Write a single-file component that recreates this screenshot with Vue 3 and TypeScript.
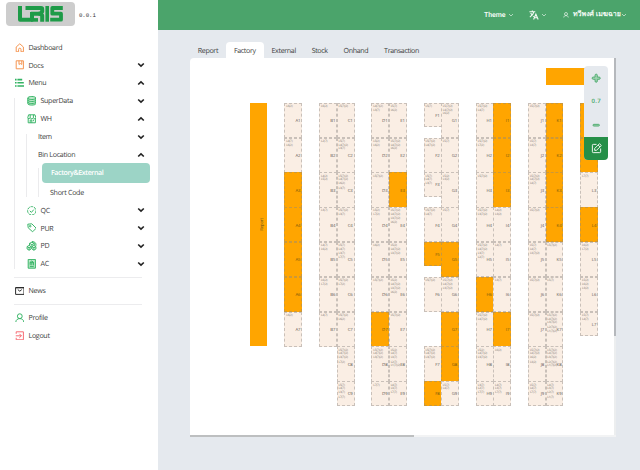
<script setup lang="ts">
interface Cell {
  id: string
  col: number
  row: number
  full: boolean
  short: boolean
  lots: string[]
}

const tabs = ['Report', 'Factory', 'External', 'Stock', 'Onhand', 'Transaction']
const activeTab = 'Factory'

const a = 'L5(7)(2)'
const b = 'L4(7)(2)'
const c = 'L3(7)(2)'
const d = 'L4(7)'
const e = 'L3(7)'
const f = 'L5(2)'
const g = 'L6(2)'

// One entry per bin; null marks an occupied bin drawn in orange.
const racks: { name: string; col: number; bins: (string[] | null)[] }[] = [
  { name: 'A', col: 3, bins: [[g], ['L4(7)', g], null, null, null, null, [g]] },
  { name: 'B', col: 5, bins: [[g], ['L2(7)'], ['L4(2)', f], [e], [d, g], [g, 'L7(2)'], [d]] },
  { name: 'C', col: 6, bins: [[a], ['L5(7)', b, 'L3(7)'], [a, b, g, e], [a, e], ['L5(7)', d, e, 'L7(7)'], [a, 'L7(2)'], [a, g], [a, b, c, 'L7(2)'], ['L5(7)', d, e, 'L7(7)']] },
  { name: 'D', col: 8, bins: [[b, 'L3(7)'], [f, g], [a], [f, 'L7(2)'], [g], [a], null, [a, b, c], ['L7(7)']] },
  { name: 'E', col: 9, bins: [['L5(7)', g], [a, b, g], null, [a, b, c, g], [f, b, c], [f, b, c, g], [a], [f, d, e, 'L2(7)', 'L1(7)(2)'], [d, e, 'L7(7)']] },
  { name: 'F', col: 11, bins: [['L5(7)'], [a, b], ['L5(7)', d, e], [a, d], null, [a], [a, b, c], null] },
  { name: 'G', col: 12, bins: [[a, b, g], ['L5(7)'], [f, 'L3(2)'], ['L5(7)'], null, [a, b, c], null, null, ['L5(7)', d]] },
  { name: 'H', col: 14, bins: [[a, d], [a, 'L7(2)'], [a], [a, c], [a, b, e, 'L2(7)'], null, [a, b], [f, b, c], ['L3(7)', 'L2(7)', 'L7(7)']] },
  { name: 'I', col: 15, bins: [null, null, null, ['L4(2)', 'L3(2)'], [d], ['L3(7)'], null, [g], [d, e, 'L7(7)']] },
  { name: 'J', col: 17, bins: [[a], ['L5(7)', 'L3(7)'], [a, b, d], [a], ['L5(7)', d, c], [a], [a], [a, b, g, 'L3(2)'], ['L5(7)', d, 'L7(7)']] },
  { name: 'K', col: 18, bins: [null, null, null, null, [a], ['L5(7)'], [a, b, c, 'L2(7)(2)', 'L1(7)(2)'], [a, b, c, 'L2(7)(2)', 'L1(7)(2)'], [d, e, 'L2(7)', 'L1(7)']] },
  { name: 'L', col: 20, bins: [null, null, ['L7(7)'], null, [g, 'L7(2)'], ['L5(2)', g, 'L3(2)'], ['L5(7)', d]] },
]

const shortBins = ['F1', 'F3', 'F5', 'L7']

const cells: Cell[] = racks.flatMap((rack) =>
  rack.bins.map((lots, i) => {
    const id = `${rack.name}${i + 1}`
    const row = rack.name === 'F' && i > 5 ? i + 2 : i + 1
    return { id, col: rack.col, row, full: lots === null, short: shortBins.includes(id), lots: lots ?? [] }
  }),
)
</script>

<template>
  <div class="app">
    <aside class="sidebar">
      <div class="brand">
        <div class="logo">
          <svg viewBox="0 0 45 16" fill="none" stroke="#1e9b48" stroke-width="4" stroke-linejoin="round">
            <path d="M2 0V13.700H14V6" />
            <path d="M7.500 2H23Q24.200 2 24.200 3.200V5.500L22.500 7.700H13" />
            <path d="M20.500 7.800H22.500L24.200 9.500V15.700" />
            <path d="M13 13.900H20" stroke-width="3.600" />
            <path d="M29.200 0V15.700" stroke-width="3.600" />
            <path d="M44.800 2H34.300V7.700H43V13.700H32.200" stroke-width="3.800" />
          </svg>
        </div>
        <span class="version">0.0.1</span>
      </div>

      <nav class="menu">
        <div class="item">
          <svg class="ic orange" viewBox="0 0 24 24"><path d="M3 10 12 2l9 8v12h-6v-6a3 3 0 0 0-6 0v6H3z" /></svg>
          <span>Dashboard</span>
        </div>
        <div class="item">
          <svg class="ic orange" viewBox="0 0 24 24"><path d="M3 2h18v20H3zM10 2v9l3.500-2L17 11V2" /></svg>
          <span>Docs</span>
          <svg class="chev" viewBox="0 0 8 6"><path d="M1.200 1.500 4 4.200 6.800 1.500" /></svg>
        </div>
        <div class="item">
          <svg class="ic green list" viewBox="0 0 24 24"><path d="M0 4h4M6 4h12M0 12h4M6 12h16M0 20h4M6 20h18" /></svg>
          <span>Menu</span>
          <svg class="chev" viewBox="0 0 8 6"><path d="M1.200 4.500 4 1.800 6.800 4.500" /></svg>
        </div>
        <div class="branch">
          <div class="item">
            <svg class="ic green" viewBox="0 0 24 24"><path class="tint" d="M2 5c0-5 20-5 20 0v14c0 5-20 5-20 0z" /><path d="M2 5c0 5 20 5 20 0M2 10c0 5 20 5 20 0M2 15c0 5 20 5 20 0" /></svg>
            <span>SuperData</span>
            <svg class="chev" viewBox="0 0 8 6"><path d="M1.200 1.500 4 4.200 6.800 1.500" /></svg>
          </div>
          <div class="item">
            <svg class="ic green" viewBox="0 0 24 24"><path d="M3 10v12h18V10M4 2h16l2 7c-1 4-5 4-6 0-1 4-7 4-8 0-1 4-5 4-6 0zM8 2v7M16 2v7M8 22v-7h4v7M16 14v4" /></svg>
            <span>WH</span>
            <svg class="chev" viewBox="0 0 8 6"><path d="M1.200 4.500 4 1.800 6.800 4.500" /></svg>
          </div>
          <div class="branch plain">
            <div class="item">
              <span>Item</span>
              <svg class="chev" viewBox="0 0 8 6"><path d="M1.200 1.500 4 4.200 6.800 1.500" /></svg>
            </div>
            <div class="item">
              <span>Bin Location</span>
              <svg class="chev" viewBox="0 0 8 6"><path d="M1.200 4.500 4 1.800 6.800 4.500" /></svg>
            </div>
            <div class="branch leaf">
              <div class="item active"><span>Factory&amp;External</span></div>
              <div class="item last"><span>Short Code</span></div>
            </div>
          </div>
          <div class="item">
            <svg class="ic green" viewBox="0 0 24 24"><circle cx="12" cy="12" r="10.500" stroke-dasharray="7 2" /><path d="m7 12 4 4 6-7" /></svg>
            <span>QC</span>
            <svg class="chev" viewBox="0 0 8 6"><path d="M1.200 1.500 4 4.200 6.800 1.500" /></svg>
          </div>
          <div class="item">
            <svg class="ic green" viewBox="0 0 24 24"><path d="M2 3l10-1 11 11-9 9L3 12z" /><circle cx="8" cy="8" r="2" /></svg>
            <span>PUR</span>
            <svg class="chev" viewBox="0 0 8 6"><path d="M1.200 1.500 4 4.200 6.800 1.500" /></svg>
          </div>
          <div class="item">
            <svg class="ic green pd" viewBox="0 0 26 24"><path d="m7 11 5 3v6l-5 3-5-3v-6zM19 11l5 3v6l-5 3-5-3v-6zM14 1l7 2 3 4v5M2 14l5 3 5-3M14 14l5 3 5-3M7 17v6M19 17v6M8 11V6l6-3 6 3v5M8 6l6 3 6-3M14 9v5" /></svg>
            <span>PD</span>
            <svg class="chev" viewBox="0 0 8 6"><path d="M1.200 1.500 4 4.200 6.800 1.500" /></svg>
          </div>
          <div class="item">
            <svg class="ic green" viewBox="0 0 24 24"><path class="tint" d="M3 1h18v22H3z" /><path d="M7 19h10M8 10v6M12 10v6M16 10v6M7 9l5-4 5 4z" /></svg>
            <span>AC</span>
            <svg class="chev" viewBox="0 0 8 6"><path d="M1.200 1.500 4 4.200 6.800 1.500" /></svg>
          </div>
        </div>
        <div class="rule"></div>
        <div class="item news">
          <svg class="ic dark" viewBox="0 0 24 24"><path d="M1.500 4h21v17h-21zM1.500 4.500h21M7 9l5 4 5-4" /></svg>
          <span>News</span>
        </div>
        <div class="rule second"></div>
        <div class="item profile">
          <svg class="ic green" viewBox="0 0 24 24"><circle cx="12" cy="8" r="6" /><path d="M2 23c0-12 20-12 20 0" /></svg>
          <span>Profile</span>
        </div>
        <div class="item">
          <svg class="ic red" viewBox="0 0 24 24"><path d="M3 7V2h18v20H3v-5M2 12h14M11 7l5 5-5 5" /></svg>
          <span>Logout</span>
        </div>
      </nav>
    </aside>

    <main class="main">
      <header class="topbar">
        <span class="theme">Theme</span>
        <svg class="caret" viewBox="0 0 6 4"><path d="m1 1 2 2 2-2" /></svg>
        <svg class="translate" viewBox="0 0 24 24"><path d="M1 4h14M8 1v3M12 4c-1 5-4 9-10 13M4 7c2 4 5 7 8 9M11 23l5.500-13L22 23M13 18.500h7" /></svg>
        <svg class="caret" viewBox="0 0 6 4"><path d="m1 1 2 2 2-2" /></svg>
        <svg class="user" viewBox="0 0 24 24"><circle cx="12" cy="8" r="6" /><path d="M3 22c0-10 18-10 18 0" /></svg>
        <span class="name">ทวีพงศ์ เมฆฉาย</span>
        <svg class="caret" viewBox="0 0 6 4"><path d="m1 1 2 2 2-2" /></svg>
      </header>

      <div class="tabs">
        <div v-for="t in tabs" :key="t" class="tab" :class="{ on: t === activeTab }"><span>{{ t }}</span></div>
      </div>

      <section class="panel">
        <div class="viewport">
          <div class="dock"></div>
          <div class="floor">
            <div class="report"><span>Report</span></div>
            <div
              v-for="cell in cells"
              :key="cell.id"
              class="bin"
              :class="{ full: cell.full, short: cell.short }"
              :style="{ gridColumn: cell.col, gridRow: cell.row }"
            >
              <div class="lots">
                <div v-for="(lot, i) in cell.lots" :key="i" :class="{ extra: i === 3 }">{{ lot }}</div>
              </div>
              <span class="bin-id">{{ cell.id }}</span>
            </div>
          </div>
        </div>
        <div class="vscroll"></div>
        <div class="hscroll"></div>
        <div class="tools">
          <div class="tool"><svg viewBox="0 0 12 12"><path d="M4.700 4.700V2.600a1.300 1.300 0 0 1 2.600 0v2.100h2.100a1.300 1.300 0 0 1 0 2.600H7.300v2.100a1.300 1.300 0 0 1-2.600 0V7.300H2.600a1.300 1.300 0 0 1 0-2.600z" /></svg></div>
          <div class="tool">0.7</div>
          <div class="tool"><svg viewBox="0 0 12 12"><rect x="2.300" y="5" width="7.400" height="2" rx="1" /></svg></div>
          <div class="tool edit"><svg viewBox="0 0 24 24"><path d="M12 3H5a2 2 0 0 0-2 2v14a2 2 0 0 0 2 2h14a2 2 0 0 0 2-2v-7M8 16v-4L18.500 1.500l4 4L12 16zM15.500 4.500l4 4" /></svg></div>
        </div>
      </section>
    </main>
  </div>
</template>

<style>
body {
  background: #e5e9ee;
}
</style>

<style scoped>
.app {
  display: flex;
  width: 640px;
  height: 470px;
  overflow: hidden;
  background: #e5e9ee;
  color: #404040;
  font-family: 'Open Sans', 'Noto Sans', sans-serif;
  font-size: 7.1px;
  letter-spacing: -0.35px;
  text-rendering: geometricPrecision;
}
svg {
  display: block;
  flex: none;
}
.sidebar {
  flex: none;
  box-sizing: border-box;
  width: 157.5px;
  background: #fff;
}
.brand {
  display: flex;
  align-items: center;
  gap: 4px;
  padding: 2px 0 0 6px;
}
.logo {
  display: flex;
  align-items: center;
  justify-content: center;
  width: 69px;
  height: 24px;
  border-radius: 4px;
  background: #cdcdcd;
}
.logo svg {
  width: 45px;
  height: 16px;
}
.version {
  padding-top: 3px;
  color: #333;
  font-family: 'Liberation Mono', monospace;
  font-size: 5.7px;
  letter-spacing: -0.05px;
}
.menu {
  padding: 12.4px 14px 0 14px;
}
.item {
  display: flex;
  align-items: center;
  height: 17.88px;
}
.item span {
  padding-top: 0.800px;
  letter-spacing: -0.3px;
}
.ic {
  width: 9.6px;
  height: 9.6px;
  margin: 0 4.4px 0 0.500px;
  fill: none;
  stroke: currentColor;
  stroke-width: 2.4;
}
.ic + span {
  flex: 1;
}
.orange { color: #f5914a; }
.green { color: #33b363; }
.red { color: #f7666f; }
.dark { color: #222; }
.list { stroke-width: 4; }
.pd { width: 11px; margin: 0 3.800px 0 -0.3px; }
.tint { fill: #bce8ca; }
.chev {
  width: 8px;
  height: 6px;
  margin-left: auto;
  margin-right: -1px;
  fill: none;
  stroke: #222;
  stroke-width: 1.6;
}
.branch {
  position: relative;
  padding-left: 12px;
}
.branch::before {
  position: absolute;
  top: 6px;
  bottom: 4px;
  left: 0.3px;
  width: 1px;
  background: #ebebed;
  content: '';
}
.branch.leaf {
  padding-left: 14px;
}
.branch.leaf::before {
  top: 5px;
}
.active {
  box-sizing: border-box;
  height: 20px;
  margin: -0.5px -6.5px 0.5px -10px;
  padding-left: 9px;
  border-radius: 4px;
  background: #9cd4c6;
  color: #fff;
  font-weight: 600;
}
.active span {
  letter-spacing: -0.42px;
}
.branch.plain {
  padding-left: 12px;
}
.leaf .last {
  margin-left: -2px;
}
.rule {
  height: 1px;
  margin: 4px 1.500px 0 0;
  background: #ececee;
}
.rule.second { margin-top: 4px; }
.news { padding-top: 4.2px; }
.profile { padding-top: 3.8px; }

.main {
  display: flex;
  flex: 1;
  flex-direction: column;
  min-width: 0;
}
.topbar {
  display: flex;
  align-items: center;
  box-sizing: border-box;
  height: 30.4px;
  padding: 0 11px 1px 326.5px;
  background: #4ba46b;
  color: #f4fbf6;
  font-weight: 600;
  font-family: Roboto, 'Noto Sans', sans-serif;
  font-size: 7px;
  letter-spacing: 0;
}
.theme {
  width: 21.500px;
  letter-spacing: -0.1px;
}
.topbar svg {
  fill: none;
  stroke: currentColor;
}
.topbar .caret {
  width: 6px;
  height: 4px;
  margin-left: 2px;
  stroke-width: 0.6;
}
.topbar .translate {
  width: 10px;
  height: 10px;
  margin-left: 15.500px;
  stroke-width: 2.6;
}
.topbar .user {
  width: 6px;
  height: 6px;
  margin-left: 16px;
  margin-right: 4px;
  stroke-width: 2.6;
}
.name {
  width: 46px;
  white-space: nowrap;
}
.tabs {
  display: flex;
  height: 15.6px;
  margin: 12px 0 0 32.500px;
}
.tab {
  display: flex;
  align-items: center;
  padding: 0.800px 8px 0 7.800px;
  border-radius: 4px 4px 0 0;
}
.tab.on {
  background: #fff;
}
.panel {
  position: relative;
  box-sizing: border-box;
  width: 426px;
  height: 379px;
  margin-left: 32.500px;
  border-radius: 4px 0 0 0;
  background: #fff;
}
.viewport {
  overflow: hidden;
  height: 377px;
}
.dock {
  width: 53px;
  height: 17.5px;
  margin: 10px 0 0 355.500px;
  background: #ffa500;
}
.floor {
  display: grid;
  grid-template-rows: repeat(8, 34.83px) 24.3px;
  grid-template-columns: repeat(20, 17.41px);
  margin: 17.200px 0 0 59.600px;
}
.report {
  display: flex;
  grid-row: 1 / 8;
  grid-column: 1;
  align-items: center;
  justify-content: center;
  background: #ffa500;
}
.report span {
  margin-left: 8px;
  color: #6b5118;
  font-size: 4.2px;
  letter-spacing: -0.1px;
  writing-mode: vertical-rl;
  transform: rotate(180deg);
}
.bin {
  display: flex;
  position: relative;
  align-items: center;
  justify-content: flex-end;
  box-sizing: border-box;
  min-width: 0;
  /* neighbouring bins share one dashed line */
  margin: 0 -0.500px -0.400px 0;
  border: 1px dashed #c9c0b9;
  background: #faeee4;
}
.bin.full {
  border-color: #cb983a;
  background: #ffa500;
}
.bin.short {
  height: 24.3px;
}
.lots {
  position: absolute;
  top: 1.3px;
  left: 0.800px;
  color: #7d7772;
  font-size: 3px;
  letter-spacing: -0.1px;
  line-height: 3.7px;
}
.extra {
  padding-top: 0.8px;
}
.bin-id {
  padding: 1.500px 0.800px 0 0;
  color: #5f5853;
  font-size: 4.300px;
  letter-spacing: -0.05px;
}
.full .bin-id {
  color: #74550f;
}
.vscroll {
  position: absolute;
  top: 0;
  right: 0;
  width: 2px;
  height: 377px;
  background: linear-gradient(#b5b8bc 278px, #eceeef 278px);
}
.hscroll {
  position: absolute;
  bottom: 0;
  left: 0;
  width: 426px;
  height: 2px;
  background: linear-gradient(90deg, #bdbfc0 224px, #f2f3f4 224px);
}
.tools {
  position: absolute;
  top: 8.4px;
  left: 394.3px;
  overflow: hidden;
  width: 24px;
  border-radius: 4px;
  background: #e5e9ee;
}
.tool {
  display: flex;
  align-items: center;
  justify-content: center;
  height: 23.4px;
  color: #45a868;
  font-weight: 600;
  font-size: 6px;
  letter-spacing: 0.3px;
}
.tool svg {
  width: 10.4px;
  height: 10.4px;
  fill: #9fd2b1;
  stroke: #45a868;
}
.tool.edit {
  background: #258f48;
}
.tool.edit svg {
  width: 11px;
  height: 11px;
  fill: none;
  stroke: #fff;
  stroke-width: 2;
}
</style>
